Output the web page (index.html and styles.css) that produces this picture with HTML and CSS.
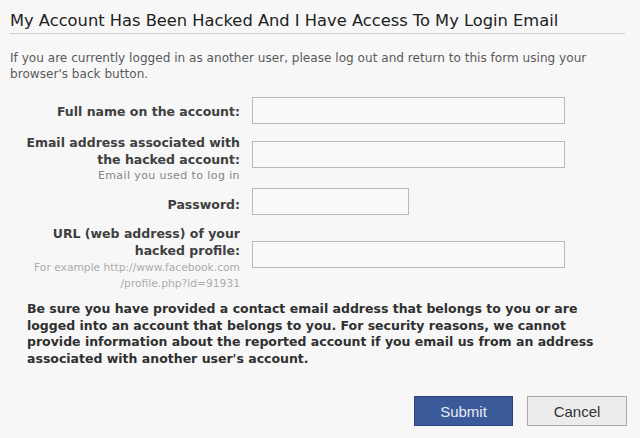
FILE: index.html
```html
<!DOCTYPE html>
<html>
<head>
<meta charset="utf-8">
<link rel="stylesheet" href="styles.css">
</head>
<body>
<div class="page">
  <h1 class="title">My Account Has Been Hacked And I Have Access To My Login Email</h1>
  <p class="intro">If you are currently logged in as another user, please log out and return to this form using your browser's back button.</p>
  <form class="form">
    <div class="row row1">
      <div class="lab"><label>Full name on the account:</label></div>
      <input class="field" type="text">
    </div>
    <div class="row row2">
      <div class="lab"><label>Email address associated with<br>the hacked account:</label><div class="hint">Email you used to log in</div></div>
      <input class="field" type="text">
    </div>
    <div class="row row3">
      <div class="lab"><label>Password:</label></div>
      <input class="field short" type="password">
    </div>
    <div class="row row4">
      <div class="lab"><label>URL (web address) of your<br>hacked profile:</label><div class="hint light">For example http://www.facebook.com<br>/profile.php?id=91931</div></div>
      <input class="field" type="text">
    </div>
  </form>
  <p class="note">Be sure you have provided a contact email address that belongs to you or are logged into an account that belongs to you. For security reasons, we cannot provide information about the reported account if you email us from an address associated with another user's account.</p>
  <div class="actions">
    <button class="btn submit" type="button">Submit</button>
    <button class="btn cancel" type="button">Cancel</button>
  </div>
</div>
</body>
</html>
```

FILE: styles.css
```css
html, body {
  margin: 0;
  padding: 0;
  background: #f7f7f7;
}
.page {
  width: 640px;
  height: 438px;
  box-sizing: border-box;
  padding: 10px 13px 0 10px;
  font-family: "DejaVu Sans", sans-serif;
  color: #2a2a2a;
}
.title {
  margin: 0;
  font-size: 16.3px;
  font-weight: normal;
  line-height: 22px;
  color: #222;
  padding-bottom: 1px;
  border-bottom: 1px solid #cfcfcf;
  margin-right: 2px;
}
.intro {
  margin: 16px 0 0 0;
  font-size: 12.1px;
  line-height: 16px;
  color: #5a5a5a;
  width: 600px;
}
.form {
  margin-top: 15px;
  display: flex;
  flex-direction: column;
}
.row {
  display: grid;
  grid-template-columns: 230px 313px;
  column-gap: 12px;
  align-items: start;
}
.lab {
  text-align: right;
  font-size: 12.5px;
  font-weight: bold;
  line-height: 17px;
  color: #404040;
}
.hint {
  font-size: 11px;
  font-weight: normal;
  line-height: 16px;
  letter-spacing: 0.4px;
  color: #858585;
}
.hint.light {
  font-size: 10.7px;
  letter-spacing: 0;
  color: #acacac;
  margin-top: 1px;
}
.field {
  box-sizing: border-box;
  height: 27px;
  width: 313px;
  margin: 0;
  border: 1px solid #b9b9b9;
  background: #f9f9f9;
  padding: 2px 4px;
}
.field.short {
  width: 157px;
}
.row1 .lab { margin-top: 6px; }
.row2 { margin-top: 10px; }
.row2 .field { margin-top: 7px; }
.row3 { margin-top: 4px; }
.row3 .lab { margin-top: 8px; }
.row4 { margin-top: 10px; }
.row4 .field { margin-top: 16px; }
.note {
  margin: 9px 0 0 17px;
  width: 590px;
  font-size: 12.5px;
  font-weight: bold;
  line-height: 16.5px;
  color: #303030;
}
.actions {
  margin-top: 29px;
  display: flex;
  justify-content: flex-end;
  gap: 14px;
}
.btn {
  height: 30px;
  font-family: "Liberation Sans", Arial, sans-serif;
  font-size: 15px;
  padding: 0;
  cursor: pointer;
}
.submit {
  width: 99px;
  background: #3b5a9a;
  border: 1px solid #2a4275;
  color: #e8ecf5;
}
.cancel {
  width: 100px;
  background: #ececec;
  border: 1px solid #a8a8a8;
  color: #333;
}
```
